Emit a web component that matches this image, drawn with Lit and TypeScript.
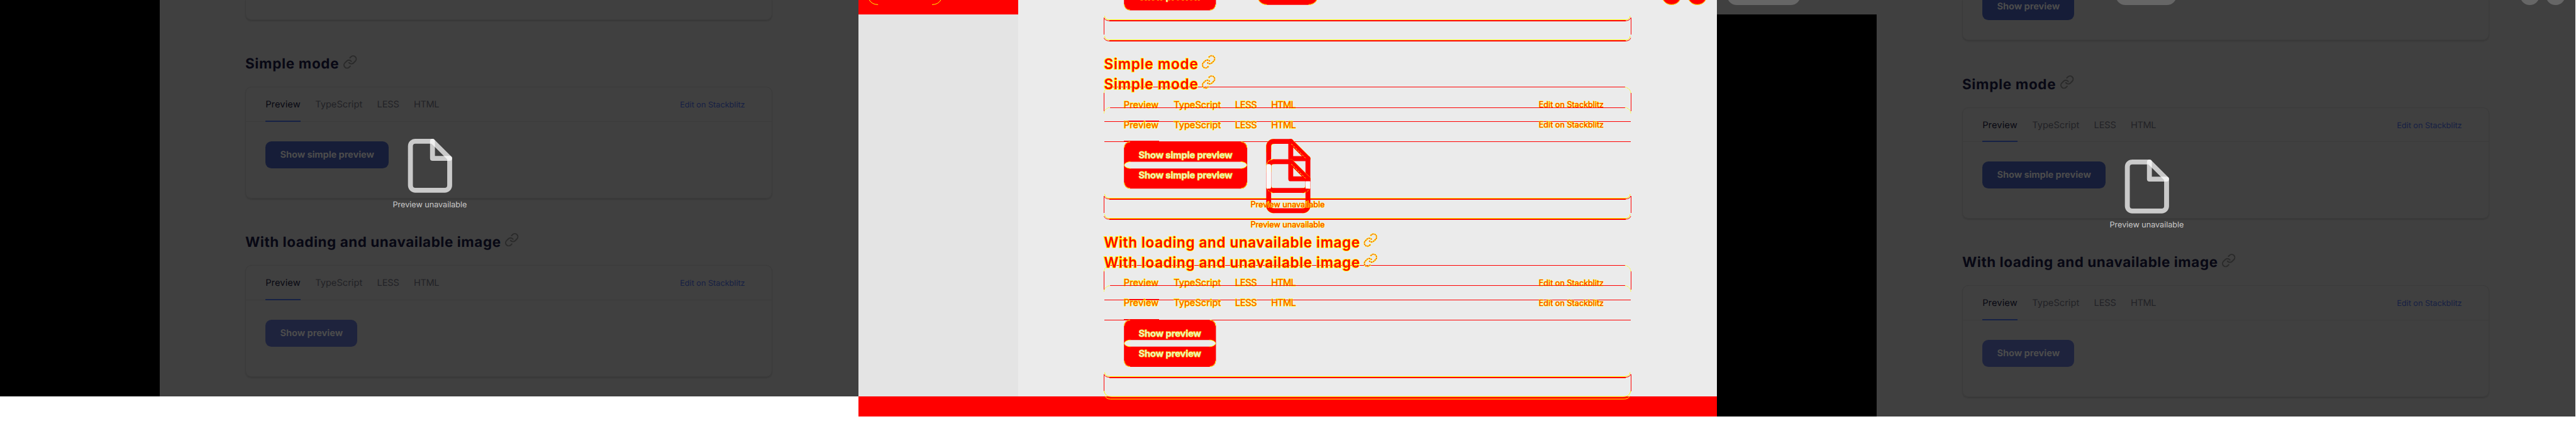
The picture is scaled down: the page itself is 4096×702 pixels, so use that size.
import { LitElement, html, css, svg, nothing } from "lit";
import { customElement, property } from "lit/decorators.js";

const FAMILY = `Inter, "Open Sans", sans-serif`;

/** Text whose tracking is set so that it takes a given width. */
@customElement("fit-label")
class FitLabel extends LitElement {
  @property() text = "";
  @property({ type: Number }) width = 0;
  @property({ type: Number }) size = 15;
  @property({ type: Number }) weight = 400;

  static styles = css`
    :host { display: inline-block; white-space: pre; }
    .box { display: inline-block; text-rendering: geometricPrecision; }
  `;

  updated() {
    const box = this.renderRoot.querySelector<HTMLElement>(".box")!;
    const run = this.renderRoot.querySelector<HTMLElement>(".run")!;
    let tracking = 0;
    for (let i = 0; i < 3; i++) {
      run.style.letterSpacing = `${tracking.toFixed(4)}px`;
      const outer = box.getBoundingClientRect().width;
      if (!outer) return;
      const actual = (run.getBoundingClientRect().width / outer) * this.width;
      tracking += (this.width - actual) / this.text.length;
    }
    run.style.letterSpacing = `${tracking.toFixed(4)}px`;
  }

  render() {
    return html`<span class="box"
      style="font-size:${this.size}px;font-weight:${this.weight};width:${this.width}px"
      ><span class="run">${this.text}</span></span>`;
  }
}

const linkPaths = svg`
  <path d="M10 13a5 5 0 0 0 7.54.54l3-3a5 5 0 0 0-7.07-7.07l-1.72 1.71"/>
  <path d="M14 11a5 5 0 0 0-7.54-.54l-3 3a5 5 0 0 0 7.07 7.07l1.71-1.71"/>`;

const filePaths = svg`
  <path d="M13 2H6a2 2 0 0 0-2 2v16a2 2 0 0 0 2 2h12a2 2 0 0 0 2-2V9z"/>
  <polyline points="13 2 13 9 20 9"/>`;

interface Demo { title: string; titleWidth: number; button: string; buttonWidth: number; muted: boolean; }

const demos: Demo[] = [
  { title: "Simple mode", titleWidth: 153, button: "Show simple preview", buttonWidth: 153, muted: false },
  { title: "With loading and unavailable image", titleWidth: 417, button: "Show preview", buttonWidth: 102, muted: true },
];

const tabs = [
  { name: "Preview", width: 57 },
  { name: "TypeScript", width: 77 },
  { name: "LESS", width: 36 },
  { name: "HTML", width: 41 },
];

/** One captured page, dimmed by the preview overlay. */
@customElement("page-shot")
class PageShot extends LitElement {
  @property({ type: Boolean }) toolbar = false;

  static styles = css`
    :host { display: block; width: 1400px; }
    .page { position: relative; display: grid; grid-template-columns: 261px 1fr; height: 647px; background: #404040; overflow: hidden; }
    .page.tall { height: 680px; }
    .side { background: #000; }
    .tall .side { margin-top: 24px; }
    .main { width: 860px; margin-left: 139px; }
    .tail { height: 33px; box-sizing: border-box; border-top: 0; border-radius: 0 0 10px 10px; padding: 0 32px; }
    .tall .tail { height: 66px; }
    .tail .button { margin-top: -27px; }
    .card { border: 1px solid #3b3b3b; box-shadow: 0 2px 2px rgba(0, 0, 0, 0.12); box-sizing: border-box; }
    .tail.card { border-top: 0; }
    .demo .card { height: 182px; border-radius: 10px; }
    .heading { display: flex; gap: 6px; height: 109px; box-sizing: border-box; padding-top: 55.6px; line-height: 32px; color: #080814; }
    .link { width: 24px; height: 24px; margin-top: 0.4px; fill: none; stroke: #2a2a2a; stroke-width: 2; stroke-linecap: round; stroke-linejoin: round; }
    .tabs { display: flex; gap: 24px; height: 56px; padding: 0 44px 0 32px; line-height: 55px; box-shadow: inset 0 -1px #3b3b3b; color: #222226; }
    .tab { height: 56px; box-sizing: border-box; }
    .tab.active { border-bottom: 2.1px solid #162145; color: #080812; }
    .edit { margin-left: auto; color: #161f44; }
    .body { padding: 32px; }
    .button { display: inline-block; height: 44px; line-height: 44px; padding: 0 24px; border-radius: 10px; background: #161d38; color: #4c4c4c; }
    .button.muted { background: #1e233d; }
    .notice { position: absolute; left: 601px; top: 223px; width: 200px; display: flex; flex-direction: column; align-items: center; color: #c9c9c9; line-height: 20px; gap: 4.3px; }
    .tall .notice { top: 256px; }
    .file { width: 96px; height: 96px; fill: none; stroke: rgba(255, 255, 255, 0.72); stroke-width: 2; stroke-linecap: round; stroke-linejoin: round; }
    .toolbar { position: absolute; left: 16px; right: 16px; top: -24px; height: 32px; display: grid; grid-template-columns: 1fr 100px 1fr; }
    .pill { height: 32px; width: 120px; border-radius: 16px; background: #666; }
    .pill.mid { width: 100px; }
    .round { width: 32px; height: 32px; border-radius: 50%; background: #666; }
    .actions { display: flex; gap: 10px; justify-content: flex-end; }
  `;

  private button(text: string, width: number, muted: boolean) {
    return html`<div class="button ${muted ? "muted" : ""}">
      <fit-label .text=${text} .width=${width} .size=${15} .weight=${700}></fit-label></div>`;
  }

  render() {
    return html`<div class="page ${this.toolbar ? "tall" : ""}">
      <div class="side"></div>
      <div class="main">
        <div class="card tail">${this.toolbar ? this.button("Show preview", 102, false) : nothing}</div>
        ${demos.map((d) => html`<section class="demo">
          <div class="heading">
            <fit-label .text=${d.title} .width=${d.titleWidth} .size=${23} .weight=${700}></fit-label>
            <svg class="link" viewBox="0 0 24 24">${linkPaths}</svg>
          </div>
          <div class="card">
            <div class="tabs">
              ${tabs.map((t, i) => html`<div class="tab ${i === 0 ? "active" : ""}">
                <fit-label .text=${t.name} .width=${t.width} .size=${15}></fit-label></div>`)}
              <fit-label class="edit" .text=${"Edit on Stackblitz"} .width=${106} .size=${13}></fit-label>
            </div>
            <div class="body">${this.button(d.button, d.buttonWidth, d.muted)}</div>
          </div>
        </section>`)}
      </div>
      <div class="notice">
        <svg class="file" viewBox="0 0 24 24">${filePaths}</svg>
        <fit-label .text=${"Preview unavailable"} .width=${121} .size=${13}></fit-label>
      </div>
      ${this.toolbar ? html`<div class="toolbar">
        <div class="pill"></div><div class="pill mid"></div>
        <div class="actions"><div class="round"></div><div class="round"></div></div>
      </div>` : nothing}
    </div>`;
  }
}

/** The changed pixels of both captures, red with yellow edges. */
@customElement("page-diff")
class PageDiff extends LitElement {
  static styles = css`
    :host { display: block; width: 1400px; height: 720px; }
    .canvas { display: block; }
    .crisp { shape-rendering: crispEdges; }
    .red { fill: #f00; }
    .edge { fill: none; stroke: #ff0; stroke-width: 1; }
    .line { fill: none; stroke: #f00; stroke-width: 1; }
    .same { fill: #ebebeb; }
    .title { font-size: 23px; font-weight: 600; fill: #f00; stroke: #ff0; stroke-width: 2px; paint-order: stroke; }
    .small { font-size: 15px; fill: #f40; stroke: #ff0; stroke-width: 1.3px; paint-order: stroke; }
    .tiny { font-size: 13px; fill: #f20; stroke: #ff0; stroke-width: 1.2px; paint-order: stroke; }
    .onred { font-size: 15px; font-weight: 700; fill: #ebebc0; stroke: #ff0; stroke-width: 0.9px; paint-order: stroke; }
    .link { fill: none; stroke: #ff0; stroke-width: 2.6; }
    .link-core { fill: none; stroke: #ebebeb; stroke-width: 0.7; }
    .link-dots { fill: none; stroke: #f00; stroke-width: 1.2; stroke-dasharray: 2 1.4; }
    .file-edge { fill: none; stroke: #ff0; stroke-width: 2.15; stroke-linecap: round; stroke-linejoin: round; }
    .file { fill: none; stroke: #f00; stroke-width: 2; stroke-linecap: round; stroke-linejoin: round; }
  `;

  private label(cls: string, text: string, x: number, y: number, w: number) {
    return svg`<text class=${cls} x=${x} y=${y} textLength=${w}>${text}</text>`;
  }

  private bottomEdge(y: number) {
    return svg`
      <path class="line" d="M400.5 ${y - 4}Q402 ${y + 1} 410 ${y + 1}" stroke-width="1.5"/>
      <path class="line" d="M1259.5 ${y - 4}Q1258 ${y + 1} 1250 ${y + 1}" stroke-width="1.5"/>
      <path class="edge" d="M401.5 ${y - 7}Q402 ${y - 0.5} 410 ${y - 0.5}"/>
      <path class="edge" d="M1258.5 ${y - 7}Q1258 ${y - 0.5} 1250 ${y - 0.5}"/>
      <rect class="crisp" fill="#ff0" x="410" y=${y - 1} width="840" height="1.03"/>
      <rect class="red crisp" x="409" y=${y} width="842" height="2"/>`;
  }

  private copy(dy: number) {
    return svg`${demos.map((d, i) => {
      const o = dy + i * 291;
      const iconX = i === 0 ? 559 : 823;
      return svg`
        ${this.label("title", d.title, 400.5, 113 + o, d.titleWidth)}
        <g transform="translate(${iconX} ${89 + o})">
          <g class="link">${linkPaths}</g><g class="link-core">${linkPaths}</g><g class="link-dots">${linkPaths}</g>
        </g>
        <rect class="red crisp" x="410" y=${142 + o} width="840" height="1.03"/>
        <path class="edge" d="M400.5 ${152 + o}a10 10 0 0 1 10-9.5M1259.5 ${152 + o}a10 10 0 0 0-10-9.5" stroke-dasharray="2 1"/>
        <rect class="red crisp" x="401" y=${198 + o} width="858" height="1.03"/>
        <rect class="red crisp" x="433" y=${197 + o} width="57" height=${dy ? 1.03 : 2}/>
        ${this.label("small", "Preview", 432.5, 176 + o, 57)}
        ${this.label("small", "TypeScript", 514, 176 + o, 77)}
        ${this.label("small", "LESS", 614, 176 + o, 36)}
        ${this.label("small", "HTML", 673, 176 + o, 40.5)}
        ${this.label("tiny", "Edit on Stackblitz", 1109.5, 175.7 + o, 106)}`;
    })}`;
  }

  private buttonPair(y: number, w: number, text: string, tw: number) {
    const r = 433 + w;
    return svg`
      <rect class="red" x="433" y=${y} width=${w} height="77" rx="10"/>
      <rect class="same" x="433.5" y=${y + 33} width=${w - 1} height="11" rx="10" ry="5.5"/>
      <path class="edge" d="M433.5 ${y + 38.5}q2-5 10-5.5M433.5 ${y + 38.5}q2 5 10 5.5M${r - 0.5} ${y + 38.5}q-2-5-10-5.5M${r - 0.5} ${y + 38.5}q-2 5-10 5.5"/>
      <path class="edge" d="M433.5 ${y + 10}a9.5 9.5 0 0 1 9.5-9.5M${r - 0.5} ${y + 10}a9.5 9.5 0 0 0-9.5-9.5M433.5 ${y + 67}a9.5 9.5 0 0 0 9.5 9.5M${r - 0.5} ${y + 67}a9.5 9.5 0 0 1-9.5 9.5"/>
      ${this.label("onred", text, 457, y + 27.3, tw)}
      ${this.label("onred", text, 457, y + 60.3, tw)}`;
  }

  private sides(y: number, h: number) {
    return svg`<rect class="red crisp" x="400" y=${y} width="1.03" height=${h}/><rect class="red crisp" x="1259" y=${y} width="1.03" height=${h}/>`;
  }

  render() {
    return html`<svg class="canvas" width="1400" height="720" viewBox="0 0 1400 720" font-family=${FAMILY}>
      <rect class="crisp" width="1400" height="647" fill="#ebebeb"/>
      <rect class="crisp" width="261" height="647" fill="#e4e4e4"/>
      <rect class="red crisp" width="261" height="24"/>
      <rect class="red crisp" y="647" width="1400" height="33"/>
      <path class="edge" d="M17.7 0Q22 7.5 32 7.5M134.3 0Q130 7.5 120 7.5"/>
      <rect class="red" x="650" y="-24" width="100" height="32" rx="16"/>
      <path class="edge" d="M652.5 0Q657 7.5 666 7.5M747.5 0Q743 7.5 734 7.5"/>
      <circle class="red" cx="1326" cy="-8" r="16"/><circle class="red" cx="1368" cy="-8" r="16"/>
      <path class="edge" d="M1312.5 0Q1317 7.5 1326 7.5Q1335 7.5 1339.5 0M1354.5 0Q1359 7.5 1368 7.5Q1377 7.5 1381.5 0"/>
      <rect class="red" x="433" y="-27" width="150" height="44" rx="10"/>
      <path class="edge" d="M433.5 7a9.5 9.5 0 0 0 9.5 9.5M582.5 7a9.5 9.5 0 0 1-9.5 9.5"/>
      ${this.label("onred", "Show preview", 457, 0.3, 102)}
      ${this.bottomEdge(33)}${this.bottomEdge(66)}
      ${this.sides(29, 27)}
      ${this.copy(0)}${this.copy(33)}
      ${this.sides(152, 30)}${this.sides(443, 30)}
      ${this.bottomEdge(324)}${this.bottomEdge(357)}${this.sides(320, 28)}
      ${this.bottomEdge(615)}${this.sides(611, 28)}
      <path class="edge" d="M400.5 638Q402 647.5 412 647.5H1248Q1258 647.5 1259.5 638"/>
      <path class="edge" d="M402 646Q404 651.5 411 651.5H1249Q1256 651.5 1258 646"/>
      ${this.buttonPair(231, 201, "Show simple preview", 153)}
      ${this.buttonPair(522, 150, "Show preview", 102)}
      ${[223, 256].map((y) => svg`<g transform="translate(653 ${y}) scale(4)">
        <path class="file-edge" d="M4 6V4a2 2 0 0 1 2-2M13 2L20 9M4 20a2 2 0 0 0 2 2M20 20a2 2 0 0 1-2 2"/>
        <g class="file">${filePaths}</g></g>`)}
      <path class="edge" d="M706 235L729 258M706 268L729 291M666 269Q667 261 675 260.5M666 306Q668 314 676 314.5M736 306Q734 314 726 314.5" stroke-dasharray="3 2"/>
      <rect x="665" y="268" width="8" height="40" rx="3" fill="#fafafa"/>
      <rect x="729" y="296" width="8" height="12" rx="1" fill="#fafafa"/>
      ${this.label("tiny", "Preview unavailable", 639.5, 338, 121)}
      ${this.label("tiny", "Preview unavailable", 639.5, 371, 121)}
    </svg>`;
  }
}

@customElement("app-root")
class AppRoot extends LitElement {
  static styles = css`
    :host { display: block; width: 4096px; height: 702px; overflow: hidden; background: #fff; }
    .board { zoom: 0.975; display: flex; align-items: flex-start; width: 4202px; height: 720px; font-family: Inter, "Open Sans", sans-serif; }
    .board > * { flex: none; }
  `;

  render() {
    return html`<div class="board">
      <page-shot></page-shot>
      <page-diff></page-diff>
      <page-shot .toolbar=${true}></page-shot>
    </div>`;
  }
}
